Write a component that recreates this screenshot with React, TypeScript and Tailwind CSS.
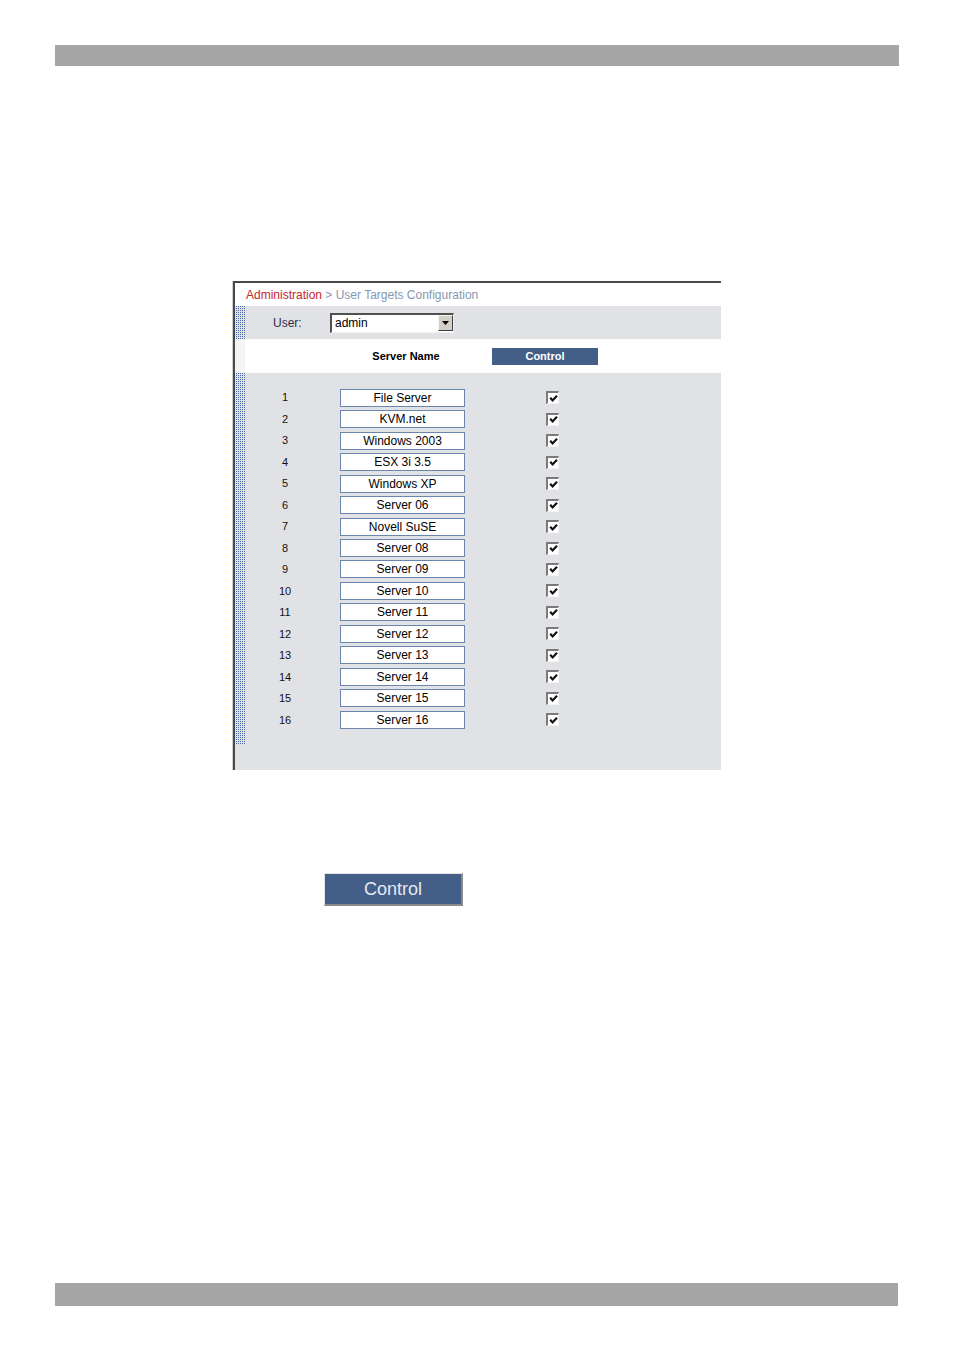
import React from 'react';

const servers = [
  'File Server',
  'KVM.net',
  'Windows 2003',
  'ESX 3i 3.5',
  'Windows XP',
  'Server 06',
  'Novell SuSE',
  'Server 08',
  'Server 09',
  'Server 10',
  'Server 11',
  'Server 12',
  'Server 13',
  'Server 14',
  'Server 15',
  'Server 16',
];

// dotted strip on the left edge of the grey bands
const dots =
  'bg-[#e1e2e6] bg-[image:conic-gradient(#4a68a8_25%,transparent_0)] bg-[length:2px_2px]';

const CheckBox: React.FC = () => (
  <div className="w-[13px] h-[13px] bg-white border-t-2 border-l-2 border-b border-r border-t-[#7a7a7a] border-l-[#7a7a7a] border-b-[#f4f4f4] border-r-[#f4f4f4] flex items-center justify-center">
    <svg width="9" height="9" viewBox="0 0 9 9">
      <path d="M1.2 3.8 L3.6 6.4 L8 1.8" stroke="#111" strokeWidth="2.2" fill="none" />
    </svg>
  </div>
);

const App: React.FC = () => {
  return (
    <div className="w-[954px] h-[1352px] bg-white relative font-['Liberation_Sans',Arial,sans-serif]">
      <div className="pt-[45px]">
        <div className="mx-[55px] h-[21px] bg-[#a6a6a6]" />
      </div>

      {/* Panel */}
      <div className="mt-[215px] ml-[232px] w-[489px] border-l border-[#cfcfcf]">
        <div className="border-l-2 border-t-2 border-[#4a4a4a]">
          {/* Title */}
          <div className="flex h-[23px]">
            <div className="w-[10px] bg-white" />
            <div className="pl-[1px] pt-[5px] text-[12px] leading-[14px] whitespace-nowrap">
              <span className="text-[#c4262e]">Administration</span>
              <span className="text-[#8498b3]"> &gt; User Targets Configuration</span>
            </div>
          </div>

          {/* User row */}
          <div className="flex h-[33px] bg-[#e1e2e6]">
            <div className={`w-[10px] ${dots}`} />
            <div className="flex items-center">
              <span className="ml-[28px] w-[57px] text-[12px] text-[#2f2f4f]">User:</span>
              <div className="w-[124px] h-[20px] bg-white border-t-2 border-l-2 border-t-[#505050] border-l-[#505050] border-b border-r border-b-[#f0f0f0] border-r-[#f0f0f0] flex items-center">
                <span className="flex-1 pl-[3px] text-[12px] text-black leading-none">admin</span>
                <div className="w-[15px] h-[16px] bg-[#d4d0c8] border border-t-[#f4f4f4] border-l-[#f4f4f4] border-b-[#404040] border-r-[#404040] flex items-center justify-center">
                  <svg width="7" height="4" viewBox="0 0 7 4">
                    <path d="M0 0 L7 0 L3.5 4 Z" fill="#000" />
                  </svg>
                </div>
              </div>
            </div>
          </div>

          {/* Header row */}
          <div className="flex h-[34px] bg-white items-center">
            <div className="w-[10px] self-stretch bg-[#f4f4f6]" />
            <div className="ml-[115px] w-[92px] text-center text-[11px] font-bold text-black">Server Name</div>
            <div className="ml-[40px] w-[106px] h-[17px] bg-[#445f87] flex items-center justify-center text-[11px] font-bold text-white">
              Control
            </div>
          </div>

          {/* List */}
          <div className="flex h-[397px] bg-[#e1e2e6]">
            <div className={`w-[10px] h-[372px] ${dots}`} />
            <div className="pt-[14px]">
              {servers.map((name, i) => (
                <div key={name} className="flex items-center h-[21.47px]">
                  <div className="w-[80px] text-center text-[11px] text-[#111]">{i + 1}</div>
                  <div className="ml-[15px] w-[125px] h-[18px] bg-white border border-[#6b86ad] flex items-center justify-center text-[12px] text-black leading-none">
                    {name}
                  </div>
                  <div className="ml-[81px]">
                    <CheckBox />
                  </div>
                </div>
              ))}
            </div>
          </div>
        </div>
      </div>

      {/* Standalone Control button */}
      <div className="mt-[103px] ml-[324px] w-[139px] h-[33px] bg-[#445f87] border-t border-l border-[#e6e6e6] border-b-2 border-r-2 border-b-[#8a8a8a] border-r-[#8a8a8a] flex items-center justify-center text-[18px] text-[#e4e9f4]">
        Control
      </div>

      <div className="absolute left-[55px] top-[1283px] w-[843px] h-[23px] bg-[#a6a6a6]" />
    </div>
  );
};

export default App;
